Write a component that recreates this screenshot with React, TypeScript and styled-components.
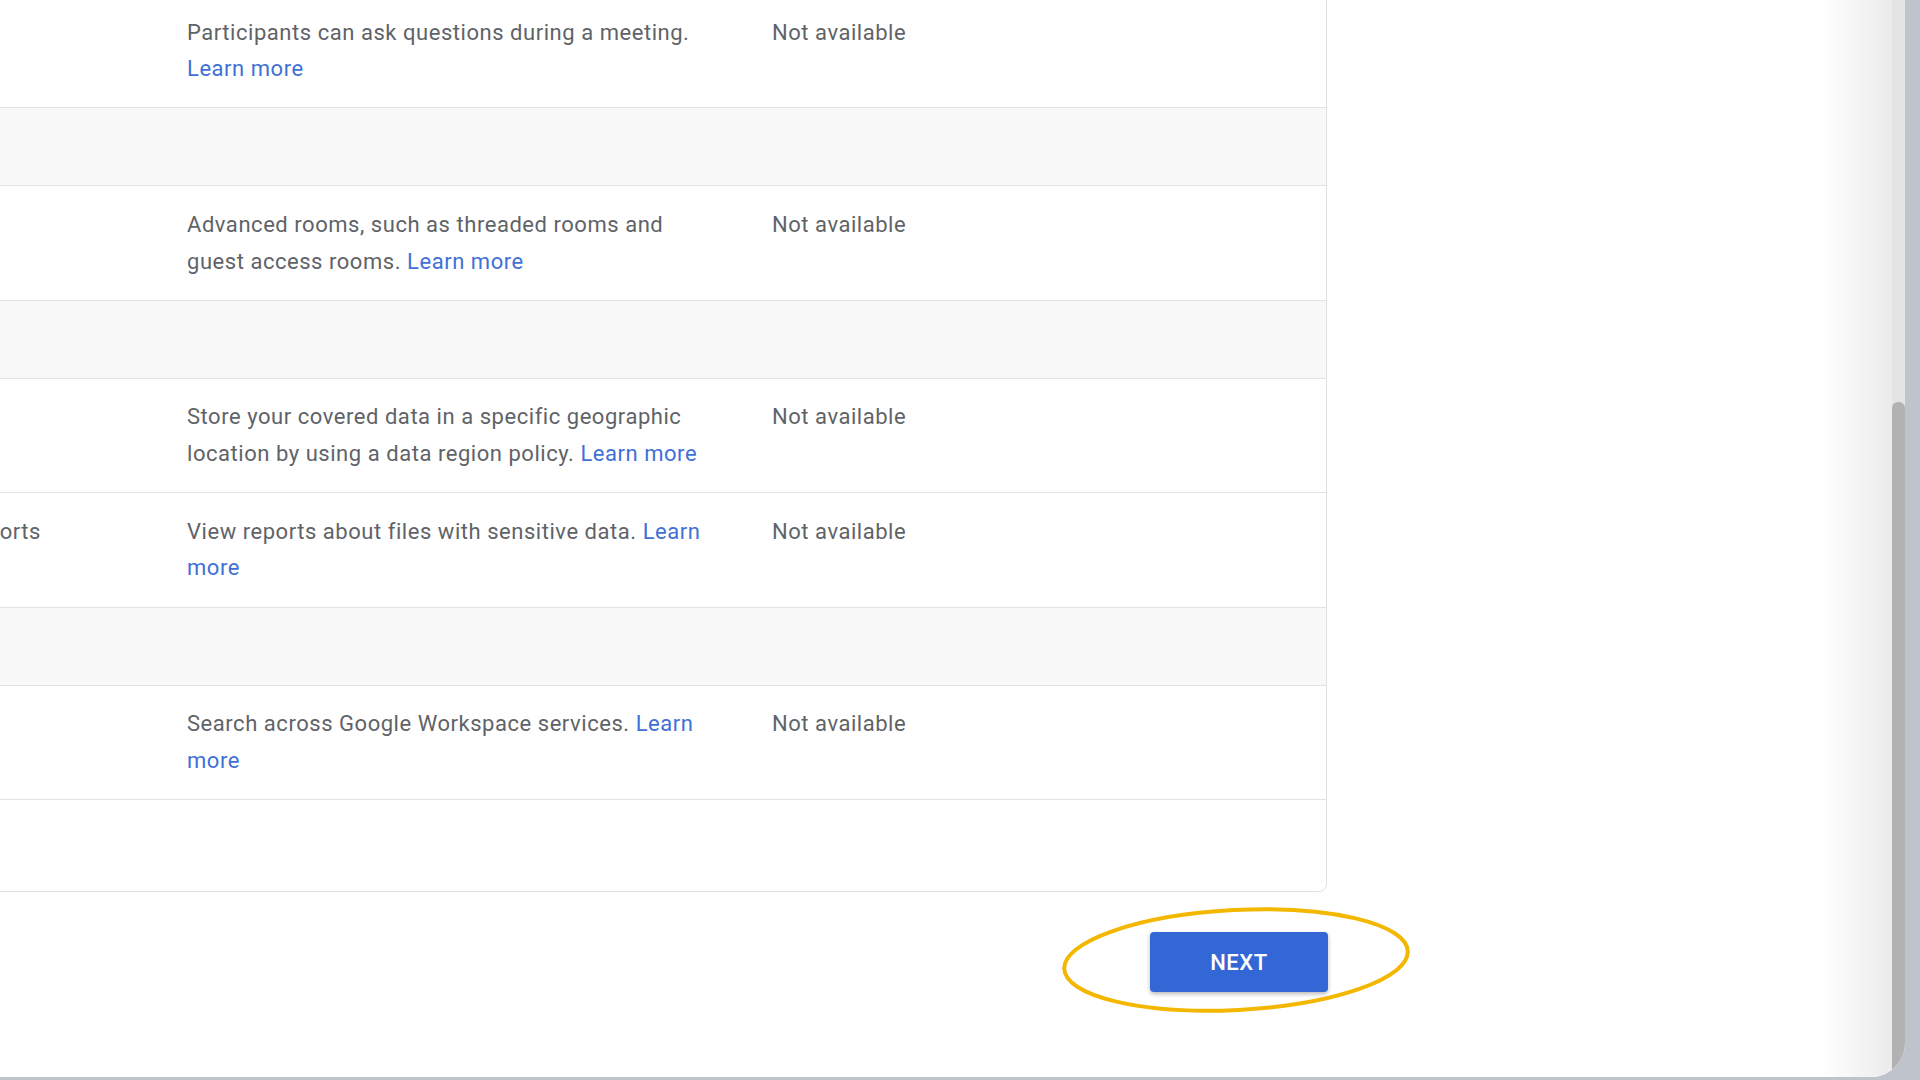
import styled, { createGlobalStyle } from "styled-components";

const GlobalStyle = createGlobalStyle`
  html, body {
    margin: 0;
    padding: 0;
    background: #bfc3cb;
    overflow: hidden;
  }
  * {
    box-sizing: border-box;
  }
`;

const Screen = styled.div`
  width: 1920px;
  height: 1080px;
  display: flex;
  align-items: flex-start;
  background: #bfc3cb;
  font-family: Roboto, "Liberation Sans", Arial, sans-serif;
`;

const Window = styled.div`
  width: 1905px;
  height: 1077px;
  display: flex;
  overflow: hidden;
  background: #fff;
  border-bottom-right-radius: 34px;
`;

const Content = styled.div`
  flex: 1;
  overflow: hidden;
  background: linear-gradient(to right, #fff calc(100% - 70px), #ebebeb);
`;

const Scrollbar = styled.div`
  width: 13px;
  display: flex;
  flex-direction: column;
  background: #e4e4e4;
`;

const Thumb = styled.div`
  margin-top: 402px;
  flex: 1;
  background: #b2b2b2;
  border-radius: 6px 6px 0 0;
`;

// the table continues past the left edge of the screen
const Card = styled.div`
  width: 1536px;
  margin: -7px 0 0 -209px;
  background: #fff;
  border: 1px solid #e0e0e0;
  border-radius: 0 0 8px 8px;
`;

type RowKind = "item" | "section" | "footer";

const Row = styled.div<{ $kind: RowKind }>`
  display: grid;
  grid-template-columns: 371px 585px 1fr;
  padding: ${(p) => (p.$kind === "item" ? "20.5px 0 19.5px 24px" : "0 0 0 24px")};
  height: ${(p) =>
    p.$kind === "section" ? "78px" : p.$kind === "footer" ? "91px" : "auto"};
  background: ${(p) => (p.$kind === "section" ? "#f8f8f8" : "#fff")};
  border-bottom: ${(p) => (p.$kind === "footer" ? "none" : "1px solid #e3e3e3")};
  border-radius: ${(p) => (p.$kind === "footer" ? "0 0 8px 8px" : "0")};
`;

const Cell = styled.div`
  font-size: 22px;
  line-height: 36.7px;
  letter-spacing: 0.54px;
  color: #5f6368;
  white-space: nowrap;
`;

const Description = styled.div`
  max-width: 525px;
  font-size: 22px;
  line-height: 36.7px;
  letter-spacing: 0.54px;
  color: #5f6368;
`;

const Link = styled.a`
  color: #4070d6;
  text-decoration: none;
  cursor: pointer;
`;

const Actions = styled.div`
  width: 1536px;
  margin-left: -209px;
  padding-top: 40px;
  display: flex;
  justify-content: flex-end;
`;

const ButtonWrap = styled.div`
  position: relative;
  margin-right: -1px;
`;

const NextButton = styled.button`
  width: 178px;
  height: 60px;
  border: none;
  border-radius: 4px;
  background: #3367d6;
  color: #fff;
  font-family: Roboto, "Liberation Sans", Arial, sans-serif;
  font-size: 22px;
  font-weight: 500;
  letter-spacing: 0.6px;
  box-shadow: 0 2px 4px rgba(0, 0, 0, 0.28);
  cursor: pointer;
`;

const Highlight = styled.svg`
  position: absolute;
  left: -94px;
  top: -32px;
  pointer-events: none;
  overflow: visible;
`;

type Feature = {
  name?: string;
  text: string;
  available: string;
};

const sections: Feature[][] = [
  [{ text: "Participants can ask questions during a meeting. ", available: "Not available" }],
  [{ text: "Advanced rooms, such as threaded rooms and guest access rooms. ", available: "Not available" }],
  [
    {
      text: "Store your covered data in a specific geographic location by using a data region policy. ",
      available: "Not available",
    },
    {
      name: "Sensitive data reports",
      text: "View reports about files with sensitive data. ",
      available: "Not available",
    },
  ],
  [{ text: "Search across Google Workspace services. ", available: "Not available" }],
];

export default function App() {
  return (
    <>
      <GlobalStyle />
      <Screen>
        <Window>
          <Content>
            <Card>
              {sections.map((features, i) => (
                <div key={i}>
                  {i > 0 && <Row $kind="section" />}
                  {features.map((f, j) => (
                    <Row $kind="item" key={j}>
                      <Cell>{f.name}</Cell>
                      <Description>
                        {f.text}
                        <Link>Learn more</Link>
                      </Description>
                      <Cell>{f.available}</Cell>
                    </Row>
                  ))}
                </div>
              ))}
              <Row $kind="footer" />
            </Card>
            <Actions>
              <ButtonWrap>
                <NextButton>NEXT</NextButton>
                <Highlight width="360" height="120" viewBox="0 0 360 120">
                  <ellipse
                    cx="180"
                    cy="60"
                    rx="172"
                    ry="50"
                    fill="none"
                    stroke="#f4b700"
                    strokeWidth="4"
                    transform="rotate(-3 180 60)"
                  />
                </Highlight>
              </ButtonWrap>
            </Actions>
          </Content>
          <Scrollbar>
            <Thumb />
          </Scrollbar>
        </Window>
      </Screen>
    </>
  );
}
